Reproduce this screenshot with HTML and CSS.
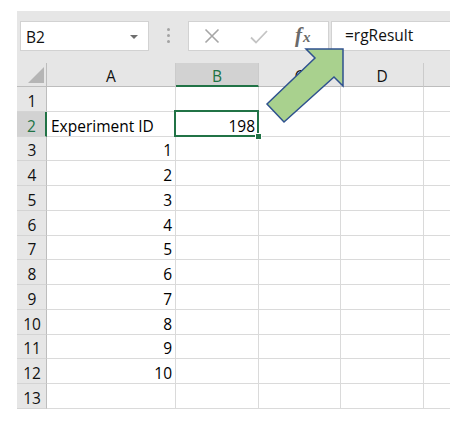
FILE: index.html
```html
<!DOCTYPE html>
<html>
<head>
<meta charset="utf-8">
<link rel="stylesheet" href="styles.css">
</head>
<body>
<div class="app">
  <div class="toolbar">
    <div class="namebox"><span class="nb-text">B2</span><span class="caret"></span></div>
    <div class="sep"><i></i><i></i><i></i></div>
    <div class="fxbox">
      <svg class="ic-x" width="16" height="16" viewBox="0 0 16 16"><path d="M1.5 1.5 L14.5 14.5 M14.5 1.5 L1.5 14.5" stroke="#a6a6a6" stroke-width="1.6" fill="none"/></svg>
      <svg class="ic-check" width="18" height="14" viewBox="0 0 18 14"><path d="M1 7.5 L6 12.5 L17 1" stroke="#c4c4c4" stroke-width="1.8" fill="none"/></svg>
      <span class="fx"><span class="f">f</span><span class="x">x</span></span>
    </div>
    <div class="finput">=rgResult</div>
  </div>
  <div class="grid">
    <div class="corner"><span class="tri"></span></div>
    <div class="ch">A</div>
    <div class="ch sel">B</div>
    <div class="ch">C</div>
    <div class="ch">D</div>
    <div class="ch last"></div>

    <div class="rh">1</div><div class="c"></div><div class="c"></div><div class="c"></div><div class="c"></div><div class="c last"></div>
    <div class="rh sel">2</div><div class="c">Experiment ID</div><div class="c num active">198</div><div class="c"></div><div class="c"></div><div class="c last"></div>
    <div class="rh">3</div><div class="c num">1</div><div class="c"></div><div class="c"></div><div class="c"></div><div class="c last"></div>
    <div class="rh">4</div><div class="c num">2</div><div class="c"></div><div class="c"></div><div class="c"></div><div class="c last"></div>
    <div class="rh">5</div><div class="c num">3</div><div class="c"></div><div class="c"></div><div class="c"></div><div class="c last"></div>
    <div class="rh">6</div><div class="c num">4</div><div class="c"></div><div class="c"></div><div class="c"></div><div class="c last"></div>
    <div class="rh">7</div><div class="c num">5</div><div class="c"></div><div class="c"></div><div class="c"></div><div class="c last"></div>
    <div class="rh">8</div><div class="c num">6</div><div class="c"></div><div class="c"></div><div class="c"></div><div class="c last"></div>
    <div class="rh">9</div><div class="c num">7</div><div class="c"></div><div class="c"></div><div class="c"></div><div class="c last"></div>
    <div class="rh">10</div><div class="c num">8</div><div class="c"></div><div class="c"></div><div class="c"></div><div class="c last"></div>
    <div class="rh">11</div><div class="c num">9</div><div class="c"></div><div class="c"></div><div class="c"></div><div class="c last"></div>
    <div class="rh">12</div><div class="c num">10</div><div class="c"></div><div class="c"></div><div class="c"></div><div class="c last"></div>
    <div class="rh">13</div><div class="c"></div><div class="c"></div><div class="c"></div><div class="c"></div><div class="c last"></div>
  </div>
</div>
<svg class="arrow" width="470" height="424" viewBox="0 0 470 424">
  <polygon points="343,49 306,49 315,58 267,104 284,122 334,77 343,86" fill="#a9d18e" stroke="#2f528f" stroke-width="1.5" stroke-linejoin="miter"/>
</svg>
</body>
</html>
```
FILE: styles.css
```css
html, body {
  margin: 0;
  padding: 0;
  background: #ffffff;
}
body {
  font-family: "Open Sans", "Noto Sans", sans-serif;
  font-size: 15.5px;
  color: #000;
  position: relative;
  width: 470px;
  height: 424px;
  overflow: hidden;
}
.app {
  margin: 11px 0 0 17px;
  width: 433px;
}
.toolbar {
  display: flex;
  height: 52px;
  box-sizing: border-box;
  padding: 10px 0 0 3px;
  background: #e6e6e6;
}
.namebox {
  width: 129px;
  height: 30px;
  box-sizing: border-box;
  background: #fff;
  border: 1px solid #d2d2d2;
  display: flex;
  align-items: center;
  justify-content: space-between;
  padding: 0 10px 0 5px;
}
.nb-text {
  line-height: 20px;
  margin-top: 1px;
  color: #111;
}
.caret {
  width: 0;
  height: 0;
  border-left: 4px solid transparent;
  border-right: 4px solid transparent;
  border-top: 4px solid #6e6e6e;
  margin-top: 1px;
}
.sep {
  width: 39px;
  display: flex;
  flex-direction: column;
  align-items: center;
  padding-top: 7px;
  gap: 3px;
  box-sizing: border-box;
}
.sep i {
  display: block;
  width: 3px;
  height: 3px;
  border-radius: 50%;
  background: #a3a3a3;
}
.fxbox {
  width: 141px;
  height: 30px;
  box-sizing: border-box;
  background: #fff;
  border: 1px solid #d2d2d2;
  display: flex;
  align-items: center;
  position: relative;
}
.ic-x {
  margin-left: 15px;
}
.ic-check {
  margin-left: 30px;
  margin-top: 2px;
}
.fx {
  margin-left: 27px;
  font-family: "Liberation Serif", "DejaVu Serif", serif;
  font-style: italic;
  font-weight: bold;
  color: #6a6a6a;
  line-height: 20px;
}
.fx .f {
  font-size: 21px;
}
.fx .x {
  font-size: 15px;
  margin-left: 1px;
}
.finput {
  margin-left: 2px;
  width: 119px;
  height: 30px;
  box-sizing: border-box;
  background: #fff;
  border: 1px solid #d2d2d2;
  border-right: none;
  padding-left: 13px;
  line-height: 27px;
  color: #111;
}
.grid {
  display: grid;
  grid-template-columns: 30px 129px 83px 82px 83px 26px;
  grid-template-rows: 24px repeat(13, 1fr);
  height: 346px;
}
.corner {
  background: #e6e6e6;
  border-right: 1px solid #bdbdbd;
  border-bottom: 1px solid #bdbdbd;
  box-sizing: border-box;
  position: relative;
}
.tri {
  position: absolute;
  right: 2px;
  bottom: 3px;
  width: 0;
  height: 0;
  border-left: 16px solid transparent;
  border-bottom: 16px solid #b5b5b5;
}
.ch {
  background: #e6e6e6;
  border-right: 1px solid #cbcbcb;
  border-bottom: 1px solid #bdbdbd;
  box-sizing: border-box;
  text-align: center;
  line-height: 22px;
  padding-top: 2px;
  color: #111;
}
.ch.sel {
  background: #d2d2d2;
  color: #217346;
  border-bottom: 2px solid #217346;
}
.ch.last {
  border-right: none;
}
.rh {
  background: #e6e6e6;
  border-right: 1px solid #bdbdbd;
  border-bottom: 1px solid #d4d4d4;
  box-sizing: border-box;
  display: flex;
  align-items: flex-end;
  justify-content: center;
  line-height: 20px;
  padding-left: 1px;
  color: #111;
}
.rh.sel {
  background: #d2d2d2;
  color: #217346;
  border-right: 2px solid #217346;
}
.c {
  background: #fff;
  border-right: 1px solid #dadada;
  border-bottom: 1px solid #dadada;
  box-sizing: border-box;
  display: flex;
  align-items: flex-end;
  line-height: 20px;
  padding: 0 3px 0 4px;
  white-space: nowrap;
  position: relative;
}
.c.last {
  border-right: none;
}
.c.num {
  justify-content: flex-end;
}
.c.active::after {
  content: "";
  position: absolute;
  left: -2px;
  top: -2px;
  right: -1px;
  bottom: -1px;
  border: 2px solid #217346;
}
.c.active::before {
  content: "";
  position: absolute;
  right: -4px;
  bottom: -4px;
  width: 5px;
  height: 5px;
  background: #217346;
  border: 1px solid #fff;
  z-index: 2;
}
.arrow {
  position: absolute;
  left: 0;
  top: 0;
  pointer-events: none;
}
```
